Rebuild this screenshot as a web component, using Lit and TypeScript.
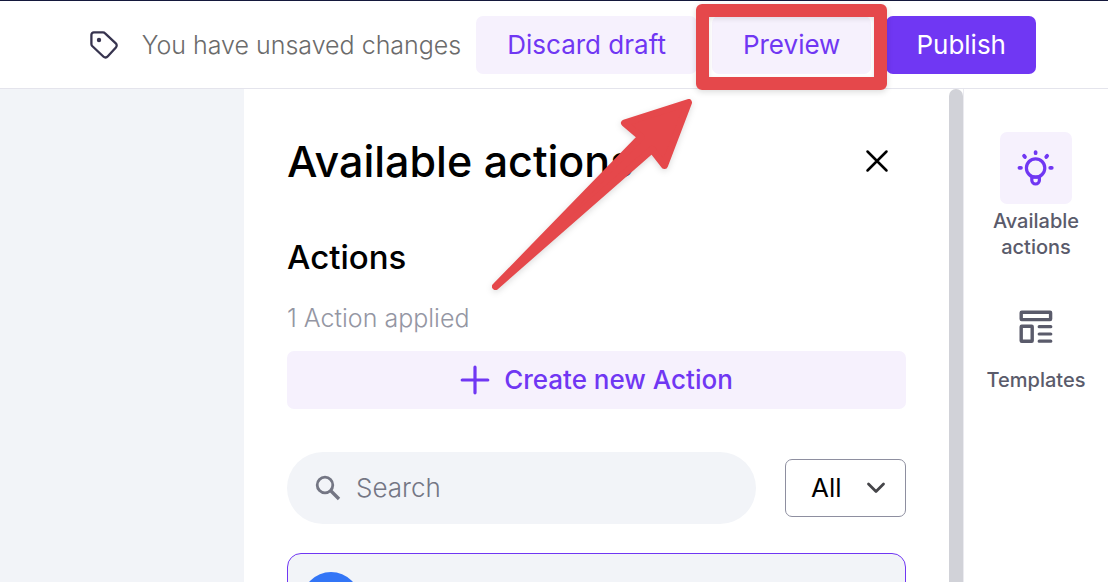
import { LitElement, html, css } from "lit";
import { customElement, state } from "lit/decorators.js";

@customElement("app-root")
export class AppRoot extends LitElement {
  @state() private filter = "All";

  static styles = css`
    :host {
      display: flex;
      flex-direction: column;
      height: 100vh;
      overflow: hidden;
      box-sizing: border-box;
      border-top: 1px solid #14183c;
      background: #fff;
      color: #000;
      font-family: Inter, "Liberation Sans", sans-serif;
      font-size: 26px;
      line-height: 36px;
    }
    * { box-sizing: border-box; }
    h1, h2, p { margin: 0; font-weight: 500; }
    button, input, select { font: inherit; border: 0; margin: 0; padding: 0; }
    button { cursor: pointer; }
    svg { display: block; flex: none; }

    .topbar {
      display: flex;
      justify-content: flex-end;
      align-items: center;
      gap: 15px;
      padding: 15px 72px 14px 16px;
      border-bottom: 1px solid #e4e4ec;
    }
    .status {
      display: flex;
      align-items: center;
      gap: 24px;
      color: #6b6b6b;
      font-size: 25px;
      font-weight: 300;
      white-space: nowrap;
    }
    .btn {
      height: 58px;
      padding: 0 31px;
      border-radius: 7px;
      background: #f6f1fd;
      color: #7037f3;
      white-space: nowrap;
    }
    .primary { padding: 0 30px; background: #7037f3; color: #fff; }
    .spot { position: relative; }
    .frame {
      position: absolute;
      inset: -12px -16px -16px -16px;
      border: 13px solid #e5484b;
      border-radius: 6px;
      box-shadow: 0 2px 6px rgba(0, 0, 0, 0.14), inset 0 2px 5px rgba(0, 0, 0, 0.1);
      pointer-events: none;
      z-index: 2;
    }
    .arrow {
      position: absolute;
      top: 78px;
      right: 173px;
      filter: drop-shadow(0 2px 3px rgba(0, 0, 0, 0.14));
      pointer-events: none;
      z-index: 2;
    }

    .body { display: flex; flex: 1; min-height: 0; }
    .canvas { flex: 1; background: #f2f4f8; }
    .panel {
      display: flex;
      flex: none;
      width: 720px;
      max-width: 80%;
      border-right: 1px solid #ebebf0;
      overflow: hidden;
    }
    .content { flex: 1; min-width: 0; padding: 43px 43px 0; }
    .thumb { width: 14px; border-radius: 7px 7px 0 0; background: #d1d2d8; }
    .title { display: flex; align-items: center; justify-content: space-between; margin-bottom: 46px; }
    h1 { font-size: 43px; line-height: 58px; white-space: nowrap; }
    h2 { font-size: 33px; line-height: 42px; margin-bottom: 22px; }
    .close {
      display: grid;
      place-items: center;
      width: 58px;
      height: 58px;
      background: none;
      color: #000;
    }
    .count { color: #9496a3; font-size: 25px; font-weight: 300; margin-bottom: 15px; }
    .create {
      display: flex;
      align-items: center;
      justify-content: center;
      gap: 14px;
      width: 100%;
      margin-bottom: 43px;
      font-weight: 500;
    }
    .tools { display: flex; align-items: center; gap: 29px; margin-bottom: 29px; }
    .search {
      display: flex;
      align-items: center;
      gap: 15px;
      flex: 1;
      min-width: 0;
      height: 72px;
      padding: 0 28px;
      border-radius: 36px;
      background: #f2f4f8;
      color: #747684;
    }
    .search input {
      flex: 1;
      min-width: 0;
      background: none;
      outline: none;
      color: inherit;
      font-weight: 300;
    }
    .search input::placeholder { color: inherit; opacity: 1; }
    .filter { display: grid; align-items: center; width: 121px; }
    .filter > * { grid-area: 1 / 1; }
    .filter select {
      appearance: none;
      width: 100%;
      height: 58px;
      padding: 0 25px;
      border: 1px solid #8e8fa0;
      border-radius: 7px;
      background: #fff;
      color: #000;
    }
    .filter svg { justify-self: end; margin-right: 20px; pointer-events: none; }
    .card {
      height: 96px;
      padding: 18px 14px;
      border: 1px solid #7037f3;
      border-radius: 14px;
      background: #f2f4f8;
    }
    .avatar { width: 58px; height: 58px; border-radius: 50%; background: #3375f6; }

    .rail {
      display: flex;
      flex-direction: column;
      align-items: center;
      gap: 31px;
      width: 144px;
      flex: none;
      padding-top: 43px;
    }
    .item {
      display: flex;
      flex-direction: column;
      align-items: center;
      gap: 4px;
      width: 120px;
      background: none;
      color: #5a5b6b;
      font-size: 20px;
      line-height: 26px;
      font-weight: 500;
    }
    .tile { display: grid; place-items: center; width: 72px; height: 72px; border-radius: 7px; }
    .active { background: #f6f1fd; color: #7037f3; }
  `;

  render() {
    return html`
      <header class="topbar">
        <div class="status">
          <svg width="28" height="28" viewBox="0 0 28 28" fill="none" stroke="#37344f" stroke-width="2.3" stroke-linejoin="round" aria-hidden="true">
            <path d="M3.8 1.4H13a3 3 0 0 1 2.1.9L25.8 12.4a2.8 2.8 0 0 1 .1 4L17.6 25.6a2.8 2.8 0 0 1-4 .1L2.2 15a3 3 0 0 1-.8-2V3.8a2.4 2.4 0 0 1 2.4-2.4Z" />
            <circle cx="9" cy="9" r="2.2" fill="#37344f" stroke="none" />
          </svg>
          <span>You have unsaved changes</span>
        </div>
        <button class="btn">Discard draft</button>
        <div class="spot">
          <button class="btn">Preview</button>
          <div class="frame"></div>
          <svg class="arrow" width="210" height="202" viewBox="0 0 210 202" aria-hidden="true">
            <path d="M7.5 192.5 153 43 136.500 29 200.500 8.500 176.500 71.500 164 55.500Z" fill="#e5484b" stroke="#e5484b" stroke-width="7" stroke-linejoin="round" />
          </svg>
        </div>
        <button class="btn primary">Publish</button>
      </header>
      <div class="body">
        <div class="canvas"></div>
        <main class="panel">
          <div class="content">
            <div class="title">
              <h1>Available actions</h1>
              <button class="close" aria-label="Close">
                <svg width="24" height="24" viewBox="0 0 24 24" fill="none" stroke="currentColor" stroke-width="2.5" stroke-linecap="round">
                  <path d="M2.500 2.500 21.500 21.500M21.500 2.500 2.500 21.500" />
                </svg>
              </button>
            </div>
            <h2>Actions</h2>
            <p class="count">1 Action applied</p>
            <button class="btn create">
              <svg width="30" height="30" viewBox="0 0 30 30" fill="none" stroke="currentColor" stroke-width="3.2" stroke-linecap="round" aria-hidden="true">
                <path d="M15 2.200V27.800M2.200 15H27.800" />
              </svg>
              Create new Action
            </button>
            <div class="tools">
              <label class="search">
                <svg width="26" height="26" viewBox="0 0 26 26" fill="none" stroke="currentColor" stroke-width="2.800" aria-hidden="true">
                  <circle cx="10" cy="10" r="7.800" />
                  <path d="M15.500 15.500 24 24" stroke-width="3.300" />
                </svg>
                <input type="text" placeholder="Search" aria-label="Search" />
              </label>
              <div class="filter">
                <select aria-label="Filter" .value=${this.filter} @change=${(e: Event) => (this.filter = (e.target as HTMLSelectElement).value)}>
                  <option>All</option>
                </select>
                <svg width="20" height="12" viewBox="0 0 20 12" fill="none" stroke="#454549" stroke-width="2.800" stroke-linecap="round" stroke-linejoin="round" aria-hidden="true">
                  <path d="M2.500 2 10 9.500 17.500 2" />
                </svg>
              </div>
            </div>
            <article class="card"><div class="avatar"></div></article>
          </div>
          <div class="thumb"></div>
        </main>
        <nav class="rail">
          <button class="item">
            <span class="tile active">
              <svg width="38" height="38" viewBox="0 0 38 38" fill="none" stroke="currentColor" stroke-width="3.200" stroke-linecap="round" stroke-linejoin="round">
                <circle cx="18.600" cy="19" r="9.200" />
                <path d="M14.800 28v3.200a3.800 3.800 0 0 0 7.600 0v-3.200Z" />
                <path d="M18.600 3v1.200M7 6.800l1 1.200M30.200 6.800l-1 1.200M2.400 18.800h1.600M33.200 18.800h1.600" stroke-width="3.700" />
              </svg>
            </span>
            Available actions
          </button>
          <button class="item">
            <span class="tile">
              <svg width="34" height="34" viewBox="0 0 34 34" fill="none" stroke="currentColor" stroke-width="3.400" stroke-linejoin="round">
                <rect x="2.200" y="2.200" width="29.400" height="7.400" rx="0.500" />
                <rect x="2.200" y="16.200" width="11" height="15" rx="0.500" />
                <path d="M20.200 16.700h11.600M20.200 24h11.600M20.200 31.200h11.600" stroke-linecap="round" stroke-width="3.200" />
              </svg>
            </span>
            Templates
          </button>
        </nav>
      </div>
    `;
  }
}
